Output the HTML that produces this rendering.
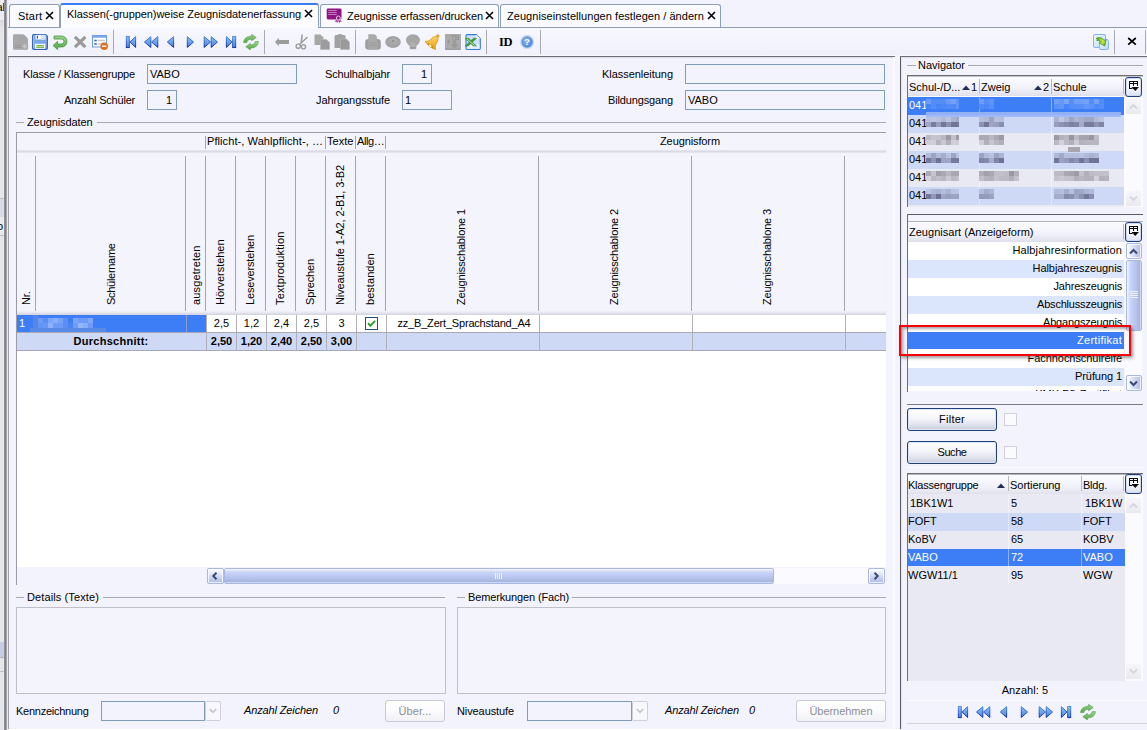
<!DOCTYPE html>
<html lang="de"><head><meta charset="utf-8"><title>Zeugnisdatenerfassung</title>
<style>
*{box-sizing:border-box}
html,body{margin:0;padding:0}
body{width:1147px;height:730px;overflow:hidden;position:relative;background:#f3f3fd;font-family:"Liberation Sans",sans-serif;font-size:11px;color:#000;line-height:13px}
.a{position:absolute;white-space:nowrap}
.t{position:absolute;white-space:nowrap;height:13px;line-height:13px}
.r{text-align:right}
.hl{position:absolute;height:1px;background:#a9a9b3}
.vl{position:absolute;width:1px;background:#a9a9b3}
.inp{position:absolute;background:#f3f3fd;border:1px solid #7f9db9;height:20px;line-height:18px;padding:0 3px 0 2px;white-space:nowrap}
.tab{position:absolute;top:4px;height:23px;border:1px solid #8d9fbb;border-bottom:none;border-radius:3px 3px 0 0;background:#fbfbff;line-height:22px;white-space:nowrap;font-size:11px}
.tab .x{position:absolute;top:6px;width:9px;height:9px}
.sep{position:absolute;top:30px;width:1px;height:24px;background:#a9a9b1}
.ic{position:absolute;top:34px;width:16px;height:16px}
</style></head><body>

<!-- left strip -->
<div class="a" style="left:0;top:0;width:4px;height:730px;background:#e6e6ea"></div>
<div class="a" style="left:0;top:0;width:4px;height:20px;background:#ededf1"></div>
<div class="a" style="left:0;top:20px;width:4px;height:8px;background:linear-gradient(#d9d9dd,#e6e6ea)"></div>
<div class="a" style="left:-7px;top:1px;width:12px;height:13px;overflow:hidden;text-align:right;font-size:11px;line-height:13px">al</div>
<div class="a" style="left:0;top:199px;width:4px;height:18px;background:#d7dbe8"></div>
<div class="a" style="left:0;top:217px;width:4px;height:18px;background:#e9e9ef"></div>
<div class="a" style="left:0;top:198px;width:4px;height:1px;background:#bcbcc6"></div>
<div class="a" style="left:0;top:235px;width:4px;height:1px;background:#bcbcc6"></div>
<div class="a" style="left:-3px;top:220px;width:6px;height:13px;overflow:hidden;text-align:right;font-size:11px;line-height:13px">o</div>
<div class="a" style="left:0;top:642px;width:4px;height:15px;background:#c6cee6"></div>
<div class="a" style="left:0;top:657px;width:4px;height:1px;background:#b4b4be"></div>
<div class="a" style="left:0;top:671px;width:4px;height:1px;background:#c2c2cc"></div>
<div class="a" style="left:4px;top:0;width:3px;height:730px;background:linear-gradient(90deg,#9a9a9e,#7f7f84 50%,#b9b9c3)"></div>
<div class="a" style="left:7px;top:0;width:1px;height:730px;background:#e9e9f4"></div>

<!-- tab strip -->
<div class="a" id="tabline" style="left:8px;top:27px;width:1139px;height:1px;background:#8d9fbb"></div>
<div class="tab" style="letter-spacing:0.233px;left:9px;width:51px;padding-left:8px">Start<svg class="x" style="left:35px" viewBox="0 0 9 9"><path d="M1 1L8 8M8 1L1 8" stroke="#000" stroke-width="1.55"/></svg></div>
<div class="tab" id="tabA" style="letter-spacing:-0.06px;left:60px;top:3px;width:259px;height:26px;padding-left:6px;border-top:2px solid #3c7cf0;background:#fdfdff;line-height:18px">Klassen(-gruppen)weise Zeugnisdatenerfassung<svg class="x" style="left:243px;top:4px" viewBox="0 0 9 9"><path d="M1 1L8 8M8 1L1 8" stroke="#000" stroke-width="1.55"/></svg></div>
<div class="tab" style="letter-spacing:-0.084px;left:320px;width:179px;padding-left:26px">Zeugnisse erfassen/drucken<svg class="a" style="left:5px;top:3px;width:17px;height:16px" viewBox="0 0 17 16"><rect x="0.700" y="0.400" width="14.800" height="11" rx="1.300" fill="#8d1482"/><path d="M2.300 2.500h8.400M2.300 4.500h8.400M2.300 6.500h8.400" stroke="#c57abf" stroke-width="1"/><path d="M10.300 11.500l-1.600 2.600 1.800-.3.500 1.600 1.200-2.600 1.200 2.600.6-1.600 1.800.3-1.700-2.700z" fill="#b043a6"/><circle cx="12.300" cy="10" r="2" fill="#8d1482" stroke="#f0d6ee" stroke-width=".9"/></svg><svg class="x" style="left:164px" viewBox="0 0 9 9"><path d="M1 1L8 8M8 1L1 8" stroke="#000" stroke-width="1.55"/></svg></div>
<div class="tab" style="letter-spacing:0.049px;left:500px;width:221px;padding-left:6px">Zeugniseinstellungen festlegen / ändern<svg class="x" style="left:206px" viewBox="0 0 9 9"><path d="M1 1L8 8M8 1L1 8" stroke="#000" stroke-width="1.55"/></svg></div>

<!-- toolbar -->
<div class="a" style="left:8px;top:28px;width:1139px;height:28px;background:linear-gradient(#f7f7ff,#f0f0fb)"></div>
<div class="a" style="left:8px;top:55px;width:1139px;height:1px;background:#f8f8ff"></div>
<div class="a" style="left:8px;top:56px;width:887px;height:1px;background:#6f6f76"></div>
<div class="a" style="left:900px;top:56px;width:247px;height:1px;background:#6f6f76"></div>
<div class="a" style="left:9px;top:57px;width:885px;height:1px;background:#dcdce8"></div>
<div class="a" style="left:901px;top:57px;width:246px;height:1px;background:#dcdce8"></div>
<div id="tb">
<svg width="0" height="0" style="position:absolute"><defs>
<linearGradient id="gb" x1="0" y1="0" x2="1" y2="0"><stop offset="0" stop-color="#7db4f6"/><stop offset="1" stop-color="#1c5ccc"/></linearGradient>
<linearGradient id="gb2" x1="1" y1="0" x2="0" y2="0"><stop offset="0" stop-color="#7db4f6"/><stop offset="1" stop-color="#1c5ccc"/></linearGradient>
<linearGradient id="gbf" x1="0" y1="0" x2="0" y2="1"><stop offset="0" stop-color="#8fbcf2"/><stop offset="1" stop-color="#4d86dc"/></linearGradient>
<linearGradient id="gbs" x1="0" y1="0" x2="0" y2="1"><stop offset="0" stop-color="#4a8de2"/><stop offset="1" stop-color="#0b2aa6"/></linearGradient>
<linearGradient id="gg" x1="0" y1="0" x2="0" y2="1"><stop offset="0" stop-color="#9ed68e"/><stop offset="1" stop-color="#55a548"/></linearGradient>
<radialGradient id="gq" cx=".4" cy=".35" r=".7"><stop offset="0" stop-color="#8fb6ea"/><stop offset="1" stop-color="#4f86d6"/></radialGradient>
<linearGradient id="gbell" x1="0" y1="0" x2="1" y2="1"><stop offset="0" stop-color="#ffe27a"/><stop offset="1" stop-color="#e79a10"/></linearGradient>
<symbol id="i-first" viewBox="0 0 16 16"><rect x="3.300" y="2.400" width="3" height="11.200" fill="url(#gbf)" stroke="url(#gbs)" stroke-width=".9"/><path d="M12.600 2.600v10.800L6.900 8z" fill="url(#gbf)" stroke="url(#gbs)" stroke-width="1" stroke-linejoin="round"/></symbol>
<symbol id="i-pprev" viewBox="0 0 16 16"><path d="M7.800 2.600v10.800L1.500 8z" fill="url(#gbf)" stroke="url(#gbs)" stroke-width="1" stroke-linejoin="round"/><path d="M14.800 2.600v10.800L8.500 8z" fill="url(#gbf)" stroke="url(#gbs)" stroke-width="1" stroke-linejoin="round"/></symbol>
<symbol id="i-prev" viewBox="0 0 16 16"><path d="M10.600 2.600v10.800L4.400 8z" fill="url(#gbf)" stroke="url(#gbs)" stroke-width="1" stroke-linejoin="round"/></symbol>
<symbol id="i-next" viewBox="0 0 16 16"><path d="M5.300 2.600v10.800L11.500 8z" fill="url(#gbf)" stroke="url(#gbs)" stroke-width="1" stroke-linejoin="round"/></symbol>
<symbol id="i-nnext" viewBox="0 0 16 16"><path d="M1.200 2.600v10.800L7.500 8z" fill="url(#gbf)" stroke="url(#gbs)" stroke-width="1" stroke-linejoin="round"/><path d="M8.200 2.600v10.800L14.500 8z" fill="url(#gbf)" stroke="url(#gbs)" stroke-width="1" stroke-linejoin="round"/></symbol>
<symbol id="i-last" viewBox="0 0 16 16"><rect x="9.700" y="2.400" width="3" height="11.200" fill="url(#gbf)" stroke="url(#gbs)" stroke-width=".9"/><path d="M3.400 2.600v10.800L9.100 8z" fill="url(#gbf)" stroke="url(#gbs)" stroke-width="1" stroke-linejoin="round"/></symbol>
<symbol id="i-refresh" viewBox="0 0 16 16"><path d="M0.600 8.600C0.800 4.500 4 2.200 8.600 2.200V0.300L13.200 3.500L8.600 6.800V5.200C6 5.200 4.200 6.200 3.800 8.600z" fill="url(#gg)" stroke="#4f9c45" stroke-width=".6" stroke-linejoin="round"/><path d="M15.400 7.600C15.200 11.700 12 14 7.400 14V15.900L2.800 12.700L7.400 9.400V11C10 11 11.800 10 12.200 7.600z" fill="url(#gg)" stroke="#4f9c45" stroke-width=".6" stroke-linejoin="round"/></symbol>
</defs></svg>
<!-- new doc (disabled) -->
<svg class="ic" style="left:13px" viewBox="0 0 16 16"><path d="M1.200 0.300h8.300q1.200 0 2.300 1l2.200 2.200q1 1 1 2.300v8.700q0 1.200-1.200 1.200H1.200Q0 15.700 0 14.500V1.500Q0 0.300 1.200 0.300z" fill="#a7a7a7"/><path d="M2 11.500h8M2 13.500h8" stroke="#9a9a9a" stroke-width="1"/><circle cx="11.700" cy="12.300" r="3.300" fill="#b1b1b1" stroke="#a2a2a2" stroke-width=".6"/><path d="M9.800 12.300h3.800M11.700 10.400v3.800" stroke="#c9c9c9" stroke-width="1.200"/></svg>
<!-- save -->
<svg class="ic" style="left:32px" viewBox="0 0 16 16"><path d="M0.600 1.600a1.100 1.100 0 0 1 1.100-1.100h11.800l1.900 1.700v12.100a1.100 1.100 0 0 1-1.100 1.100H1.700a1.100 1.100 0 0 1-1.100-1.100z" fill="#7ba5e6" stroke="#2f63b8" stroke-width="1.100"/><path d="M1.700 1.500v13" stroke="#a9c6f0" stroke-width="1"/><rect x="3.600" y="0.900" width="9.800" height="4.600" fill="#f4f7fd"/><rect x="9" y="0.900" width="4.400" height="4.600" fill="#d5e2f6"/><rect x="4.800" y="1.700" width="1.200" height="2.800" fill="#355fae"/><rect x="3" y="9.800" width="10.200" height="5" fill="#fdfdff"/><path d="M4.200 11.600h7.800M4.200 13.400h7.800" stroke="#7cba49" stroke-width="1.200"/></svg>
<!-- undo -->
<svg class="ic" style="left:52px" viewBox="0 0 16 16"><path d="M2 2H9.500A5.500 5.500 0 0 1 9.500 13H5.600V15.600L1 11.500L5.600 7.400V10H9.500A2.500 2.500 0 0 0 9.500 5H2z" fill="url(#gg)" stroke="#3f9440" stroke-width=".8" stroke-linejoin="round"/></svg>
<!-- delete X -->
<svg class="ic" style="left:72px" viewBox="0 0 16 16"><path d="M2.900 2.900L13.400 13.100M13.400 2.900L2.900 13.100" stroke="#9a9a9a" stroke-width="3.200"/></svg>
<!-- form minus -->
<svg class="ic" style="left:92px" viewBox="0 0 16 16"><rect x="0.500" y="1.500" width="14" height="11.500" fill="#fbfcff" stroke="#6f9be0" stroke-width="1"/><rect x="0.500" y="1.500" width="14" height="2.200" fill="#78a6ea"/><path d="M2.200 6.500h2.600M2.200 10h2.600" stroke="#2f65c4" stroke-width="1.300"/><path d="M6 6.500h7M6 10h4" stroke="#c9c9c9" stroke-width="1.600"/><circle cx="12.200" cy="12.200" r="3.500" fill="#e8701a" stroke="#c9560f" stroke-width=".5"/><rect x="10.200" y="11.500" width="4" height="1.500" fill="#fff"/></svg>
<div class="sep" style="left:113px"></div>
<svg class="ic" style="left:123px"><use href="#i-first"/></svg>
<svg class="ic" style="left:143px"><use href="#i-pprev"/></svg>
<svg class="ic" style="left:163px"><use href="#i-prev"/></svg>
<svg class="ic" style="left:182px"><use href="#i-next"/></svg>
<svg class="ic" style="left:203px"><use href="#i-nnext"/></svg>
<svg class="ic" style="left:223px"><use href="#i-last"/></svg>
<svg class="ic" style="left:243px"><use href="#i-refresh"/></svg>
<div class="sep" style="left:264px"></div>
<!-- back arrow -->
<svg class="ic" style="left:274px" viewBox="0 0 16 16"><path d="M1 8l3.800-4.200v2.200h10.200v4H4.800v2.200z" fill="#9c9c9c"/></svg>
<!-- scissors -->
<svg class="ic" style="left:294px" viewBox="0 0 16 16"><path d="M8.200 0.500L7 9.500M13.500 3L5.500 10.500" stroke="#9c9c9c" stroke-width="1.500" fill="none"/><circle cx="4.200" cy="12.200" r="2.100" fill="none" stroke="#9c9c9c" stroke-width="1.400"/><circle cx="9.500" cy="12.800" r="2.100" fill="none" stroke="#9c9c9c" stroke-width="1.400"/></svg>
<!-- copy -->
<svg class="ic" style="left:314px" viewBox="0 0 16 16"><path d="M0.500 0.500h6l3 3v7.500h-9z" fill="#a6a6a6"/><path d="M6.500 5.500h6l3 3v7h-9z" fill="#9c9c9c" stroke="#b4b4b4" stroke-width=".6"/></svg>
<!-- paste -->
<svg class="ic" style="left:334px" viewBox="0 0 16 16"><path d="M0.500 2.500q0-1.500 1.500-1.500h1.500q.5-1 2.500-1t2.500 1h1.500q1.500 0 1.500 1.500v11.500h-11z" fill="#a1a1a1"/><path d="M6.500 5h6l3 3v7.500h-9z" fill="#9a9a9a" stroke="#b6b6b6" stroke-width=".6"/></svg>
<div class="sep" style="left:355px"></div>
<!-- printer -->
<svg class="ic" style="left:365px" viewBox="0 0 16 16"><path d="M3.300 0.300h5.200q2.200 0 3.400 2.400v5H3.300z" fill="#a9a9a9"/><rect x="0.200" y="5" width="15.600" height="10.600" rx="3.200" fill="#9d9d9d"/><path d="M3.300 5h8.600v3H3.300z" fill="#a9a9a9"/><rect x="3.300" y="8.300" width="9.200" height="3.200" fill="#a4a4a4"/><path d="M3.300 8.300v3.200M12.500 8.300v3.200" stroke="#b4b4b4" stroke-width=".6"/><rect x="3" y="12" width="10" height="3.800" rx="1.200" fill="#a8a8a8"/></svg>
<!-- disc -->
<svg class="ic" style="left:385px" viewBox="0 0 16 16"><ellipse cx="8" cy="8" rx="7.800" ry="6" fill="#a3a3a3"/><ellipse cx="8" cy="7.300" rx="4.500" ry="3" fill="#ababab"/><circle cx="8" cy="7" r="1.100" fill="#8d8d8d"/></svg>
<!-- bulb -->
<svg class="ic" style="left:405px" viewBox="0 0 16 16"><path d="M8 0.300C12.500 0.300 15 3.400 15 6.200C15 9 12.400 10.400 11.300 12.200V14.300q0 1-1 1h-4.600q-1 0-1-1V12.200C3.600 10.400 1 9 1 6.200C1 3.400 3.500 0.300 8 0.300z" fill="#a6a6a6"/><path d="M5.600 8.300h4.800v5.500H5.600z" fill="#b0b0b0"/><path d="M5.200 13.600h5.600" stroke="#989898" stroke-width="1"/></svg>
<!-- bell -->
<svg class="ic" style="left:425px;top:33px;width:17px;height:17px" viewBox="0 0 17 17"><g transform="rotate(38 8.5 8.5)"><circle cx="8.500" cy="1.500" r="1.300" fill="#eeb02a" stroke="#c98a10" stroke-width=".5"/><path d="M8.500 2.600C5.800 2.600 5.300 6 4.900 9C4.600 11.200 3.200 12.300 1.800 13.600Q8.500 16 15.200 13.600C13.800 12.300 12.400 11.200 12.100 9C11.700 6 11.200 2.600 8.500 2.600z" fill="url(#gbell)" stroke="#d9940f" stroke-width=".7"/><ellipse cx="8.500" cy="13.600" rx="3.300" ry="1.300" fill="#c98a10"/><ellipse cx="8.500" cy="13.900" rx="1.700" ry="1.100" fill="#fff0a8"/></g></svg>
<!-- TB -->
<svg class="ic" style="left:445px" viewBox="0 0 16 16"><rect x="0" y="0" width="16" height="16" fill="#ababab"/><text x="5.800" y="5.800" font-family="Liberation Sans, sans-serif" font-size="6.500" fill="#8c8c8c">TB</text><path d="M8.500 6.500v4h-2l3 3.500 3-3.500h-2v-4z" fill="#9c9c9c" stroke="#8f8f8f" stroke-width=".5"/><path d="M1.800 7.800h3.600M3.600 6v3.600" stroke="#949494" stroke-width="1"/><path d="M0.500 15.200h15" stroke="#8f8f8f" stroke-width="1" stroke-dasharray="2 1"/></svg>
<!-- excel -->
<svg class="ic" style="left:465px" viewBox="0 0 16 16"><path d="M2.200 0.600h8.800l4.300 4.200v9.500q0 1.200-1.200 1.200H2.200q-1.200 0-1.200-1.200V1.800q0-1.200 1.200-1.200z" fill="#cfe1f9" stroke="#3a78d8" stroke-width="1.100"/><path d="M11 0.800v4h4.200z" fill="#f4f8ff"/><rect x="2" y="10.500" width="12.500" height="4.200" fill="#e8f1fd"/><path d="M0 4.200h3.800l2.200 2.300 2.600-2.300h3.100L7.400 8.200l4.200 3.900H8.300L5.800 9.700 3.200 12.100H0l4.200-3.900z" fill="#3f9a3a" stroke="#2c7a2c" stroke-width=".4"/><path d="M1.800 4.800l7.800 6.800" stroke="#d4efc8" stroke-width=".9"/></svg>
<div class="sep" style="left:486px"></div>
<div class="a" style="left:499px;top:35px;font-family:'Liberation Serif',serif;font-weight:bold;font-size:12.500px;line-height:14px;letter-spacing:-.3px">ID</div>
<!-- help -->
<svg class="ic" style="left:519px" viewBox="0 0 16 16"><circle cx="8.100" cy="8" r="6.900" fill="#b7cff1"/><circle cx="8.100" cy="8" r="6.200" fill="none" stroke="#dbe7f9" stroke-width=".8"/><circle cx="8.100" cy="8" r="5.300" fill="url(#gq)" stroke="#4d82d2" stroke-width=".7"/><text x="8.100" y="11.200" text-anchor="middle" font-family="Liberation Sans, sans-serif" font-weight="bold" font-size="9" fill="#fff">?</text></svg>
<div class="sep" style="left:540px"></div>
<!-- right side -->
<svg class="ic" style="left:1093px" viewBox="0 0 16 16"><defs><linearGradient id="gdoc" x1="0" y1="0" x2="1" y2="1"><stop offset="0" stop-color="#f2f8ff"/><stop offset="1" stop-color="#bcd8f8"/></linearGradient><linearGradient id="gya" x1="0" y1="0" x2="1" y2="1"><stop offset="0" stop-color="#35a322"/><stop offset=".55" stop-color="#d4ee3c"/><stop offset="1" stop-color="#3aa624"/></linearGradient></defs><rect x="0.500" y="0.500" width="12" height="13" rx="1.500" fill="url(#gdoc)" stroke="#86b2ea"/><rect x="6.500" y="5.500" width="9" height="10" rx="1.500" fill="url(#gdoc)" stroke="#86b2ea"/><path d="M3 4.600C5.500 2.800 9.600 3.400 11.300 6.800l1.700-.900-1.200 6.200-5.400-3 1.900-.900C7.400 6.300 5.200 6 3.800 6.800L4.800 5.500z" fill="url(#gya)" stroke="#2c8f1c" stroke-width=".7" stroke-linejoin="round"/></svg>
<div class="sep" style="left:1114px"></div>
<svg class="a" style="left:1127px;top:37px;width:10px;height:9px" viewBox="0 0 10 9"><path d="M1.200 1L8.800 7.600M8.800 1L1.200 7.600" stroke="#000" stroke-width="1.700"/></svg>
<div class="sep" style="left:1145px"></div>
</div>

<!-- main left panel -->
<div class="vl" style="left:8px;top:57px;height:672px;background:#a0a0aa"></div>
<div id="form">
<div class="t r" style="letter-spacing:-0.163px;left:10px;width:125px;top:68px">Klasse / Klassengruppe</div>
<div class="inp" style="left:147px;top:64px;width:150px">VABO</div>
<div class="t r" style="letter-spacing:-0.214px;left:10px;width:125px;top:94px">Anzahl Schüler</div>
<div class="inp r" style="left:147px;top:90px;width:30px;padding-right:4px">1</div>
<div class="t r" style="letter-spacing:-0.127px;left:290px;width:100px;top:68px">Schulhalbjahr</div>
<div class="inp r" style="left:402px;top:64px;width:30px;padding-right:4px">1</div>
<div class="t r" style="letter-spacing:-0.087px;left:290px;width:100px;top:94px">Jahrgangsstufe</div>
<div class="inp" style="left:402px;top:90px;width:50px">1</div>
<div class="t r" style="letter-spacing:-0.04px;left:560px;width:113px;top:68px">Klassenleitung</div>
<div class="inp" style="left:685px;top:64px;width:200px"></div>
<div class="t r" style="letter-spacing:-0.139px;left:560px;width:113px;top:94px">Bildungsgang</div>
<div class="inp" style="left:685px;top:90px;width:200px">VABO</div>
<div class="hl" style="left:16px;top:122px;width:8px"></div>
<div class="t" style="letter-spacing:-0.098px;left:27px;top:116px">Zeugnisdaten</div>
<div class="hl" style="left:97px;top:122px;width:789px"></div>
</div>
<div id="grid">
<style>
#grid .vt{position:absolute;top:292px;height:13px;line-height:13px;white-space:nowrap;transform-origin:0 100%;transform:rotate(-90deg)}
#grid .cs{position:absolute;top:156px;width:1px;height:155px;background:#a4a4ae}
#grid .bs{position:absolute;top:136px;width:1px;height:13px;background:#a4a4ae}
#grid .c{position:absolute;top:315px;height:17px;line-height:17px;text-align:center;background:#fff;border-left:1px solid #b0b0ba;white-space:nowrap}
#grid .av{position:absolute;top:333px;height:17px;line-height:16px;text-align:center;font-weight:bold;border-left:1px solid #b0b0ba;white-space:nowrap}
</style>
<div class="a" style="left:16px;top:132px;width:870px;height:1px;background:#9c9ca6"></div>
<div class="a" style="left:16px;top:132px;width:1px;height:453px;background:#9c9ca6"></div>
<!-- band header -->
<div class="a" style="left:17px;top:133px;width:869px;height:18px;background:#f4f4fd"></div>
<div class="a" style="left:17px;top:150px;width:869px;height:3px;background:linear-gradient(#e6e6f0,#dcdce7 50%,#e9e9f3)"></div>
<div class="bs" style="left:205px"></div><div class="bs" style="left:325px"></div><div class="bs" style="left:355px"></div><div class="bs" style="left:385px"></div>
<div class="t" style="letter-spacing:0.084px;left:207px;top:135px">Pflicht-, Wahlpflicht-, …</div>
<div class="t" style="letter-spacing:0.041px;left:327px;top:135px">Texte</div>
<div class="t" style="letter-spacing:-0.369px;left:357px;top:135px">Allg…</div>
<div class="t" style="letter-spacing:-0.104px;left:385px;width:610px;text-align:center;top:135px">Zeugnisform</div>
<!-- column header -->
<div class="a" style="left:17px;top:153px;width:869px;height:158px;background:#f4f4fd"></div>
<div class="cs" style="left:35px"></div><div class="cs" style="left:185px"></div><div class="cs" style="left:205px"></div><div class="cs" style="left:235px"></div><div class="cs" style="left:265px"></div><div class="cs" style="left:295px"></div><div class="cs" style="left:325px"></div><div class="cs" style="left:355px"></div><div class="cs" style="left:385px"></div><div class="cs" style="left:538px"></div><div class="cs" style="left:691px"></div><div class="cs" style="left:844px"></div>
<div class="vt" style="letter-spacing:-0.121px;left:33px">Nr.</div>
<div class="vt" style="letter-spacing:-0.293px;left:118px">Schülername</div>
<div class="vt" style="letter-spacing:0.136px;left:203px">ausgetreten</div>
<div class="vt" style="letter-spacing:-0.046px;left:227px">Hörverstehen</div>
<div class="vt" style="letter-spacing:-0.167px;left:257px">Leseverstehen</div>
<div class="vt" style="letter-spacing:0.132px;left:287px">Textproduktion</div>
<div class="vt" style="letter-spacing:-0.137px;left:317px">Sprechen</div>
<div class="vt" style="letter-spacing:-0.11px;left:347px">Niveaustufe 1-A2, 2-B1, 3-B2</div>
<div class="vt" style="letter-spacing:0.045px;left:377px">bestanden</div>
<div class="vt" style="letter-spacing:-0.137px;left:468px">Zeugnisschablone 1</div>
<div class="vt" style="letter-spacing:-0.137px;left:621px">Zeugnisschablone 2</div>
<div class="vt" style="letter-spacing:-0.137px;left:774px">Zeugnisschablone 3</div>
<div class="a" style="left:17px;top:311px;width:869px;height:4px;background:linear-gradient(#f1f1fb,#e4e4ee 50%,#d0d0db)"></div>
<!-- data row -->
<div class="a" style="left:17px;top:315px;width:189px;height:17px;background:#3d7ef6"></div>
<div class="a" style="left:186px;top:315px;width:1px;height:17px;background:#8b9fc9"></div>
<svg class="a" style="left:30px;top:315px;width:76px;height:18px" viewBox="0 0 76 18" shape-rendering="crispEdges"><rect x="3" y="0" width="5" height="18" fill="#5786e6"/><rect x="8" y="3" width="5" height="5" fill="#6d9bf7"/><rect x="8" y="8" width="5" height="5" fill="#6293f6"/><rect x="13" y="3" width="5" height="5" fill="#5b8ff6"/><rect x="13" y="8" width="5" height="5" fill="#6897f7"/><rect x="18" y="3" width="5" height="5" fill="#7ba6f9"/><rect x="18" y="8" width="5" height="5" fill="#8db2fa"/><rect x="23" y="3" width="5" height="5" fill="#8aaffa"/><rect x="23" y="8" width="5" height="5" fill="#6d9bf7"/><rect x="28" y="3" width="5" height="5" fill="#79a3f8"/><rect x="28" y="8" width="5" height="5" fill="#6c9af7"/><rect x="33" y="3" width="5" height="5" fill="#5d90f6"/><rect x="33" y="8" width="5" height="5" fill="#5a8ef5"/><rect x="38" y="8" width="5" height="5" fill="#4a84f4"/><rect x="43" y="3" width="5" height="5" fill="#7aa4f8"/><rect x="43" y="8" width="5" height="5" fill="#6d9bf7"/><rect x="48" y="3" width="5" height="5" fill="#6b9af7"/><rect x="48" y="8" width="5" height="5" fill="#94b7fb"/><rect x="53" y="3" width="5" height="5" fill="#6b9af7"/><rect x="53" y="8" width="5" height="5" fill="#88aefa"/><rect x="58" y="3" width="5" height="5" fill="#7ea7f9"/><rect x="58" y="8" width="5" height="5" fill="#6d9bf7"/><rect x="0" y="13" width="76" height="5" fill="#5b89e6"/></svg>
<div class="t" style="left:19px;top:317px;color:#fff">1</div>
<div class="c" style="left:206px;width:30px">2,5</div>
<div class="c" style="left:236px;width:30px">1,2</div>
<div class="c" style="left:266px;width:30px">2,4</div>
<div class="c" style="left:296px;width:30px">2,5</div>
<div class="c" style="left:326px;width:30px">3</div>
<div class="c" style="left:356px;width:30px"><svg class="a" style="left:8px;top:2px;width:13px;height:13px" viewBox="0 0 13 13"><rect x="0.5" y="0.5" width="12" height="12" fill="#fff" stroke="#1c5180"/><path d="M3 6.2l2.3 2.6L10 3.8" fill="none" stroke="#21a121" stroke-width="1.8"/></svg></div>
<div class="c" style="letter-spacing:-0.191px;left:386px;width:153px;padding-left:2px">zz_B_Zert_Sprachstand_A4</div>
<div class="c" style="left:539px;width:153px"></div>
<div class="c" style="left:692px;width:153px"></div>
<div class="c" style="left:845px;width:41px"></div>
<div class="a" style="left:17px;top:332px;width:869px;height:1px;background:#a8a8b2"></div>
<!-- average row -->
<div class="a" style="left:17px;top:333px;width:869px;height:17px;background:#cdd9f5"></div>
<div class="av" style="letter-spacing:0.269px;left:36px;width:150px;border-left:none">Durchschnitt:</div>
<div class="av" style="left:206px;width:30px">2,50</div>
<div class="av" style="left:236px;width:30px">1,20</div>
<div class="av" style="left:266px;width:30px">2,40</div>
<div class="av" style="left:296px;width:30px">2,50</div>
<div class="av" style="left:326px;width:30px">3,00</div>
<div class="av" style="left:356px;width:30px"></div>
<div class="av" style="left:386px;width:153px"></div>
<div class="av" style="left:539px;width:153px"></div>
<div class="av" style="left:692px;width:153px"></div>
<div class="av" style="left:845px;width:41px"></div>
<div class="a" style="left:17px;top:350px;width:869px;height:1px;background:#a8a8b2"></div>
<!-- empty -->
<div class="a" style="left:17px;top:351px;width:869px;height:216px;background:#fff"></div>
<!-- h scrollbar -->
<div class="a" style="left:17px;top:567px;width:869px;height:18px;background:#f3f3fd"></div>
<div class="a" style="left:207px;top:568px;width:17px;height:16px;border:1px solid #a9b8e0;border-radius:2px;background:linear-gradient(#ffffff,#dfe6fa 35%,#aebbe4);box-shadow:inset 0 0 0 1px rgba(255,255,255,.8)"><svg class="a" style="left:3px;top:3px;width:8px;height:8px" viewBox="0 0 8 8"><path d="M5.5 0.8L2.3 4l3.2 3.2" fill="none" stroke="#3b4b6c" stroke-width="2"/></svg></div>
<div class="a" style="left:224px;top:568px;width:550px;height:16px;border:1px solid #a9b8e0;border-radius:2px;background:linear-gradient(#f6f8ff,#c9d5f9 22%,#b7c4ee 60%,#a6b4de 92%,#f0f3fd)"></div>
<div class="a" style="left:495px;top:573px;width:8px;height:6px;background:repeating-linear-gradient(90deg,#eef2fd 0 1px,transparent 1px 2px)"></div>
<div class="a" style="left:774px;top:568px;width:94px;height:16px;background:#fafaff"></div>
<div class="a" style="left:868px;top:568px;width:17px;height:16px;border:1px solid #a9b8e0;border-radius:2px;background:linear-gradient(#ffffff,#dfe6fa 35%,#aebbe4);box-shadow:inset 0 0 0 1px rgba(255,255,255,.8)"><svg class="a" style="left:3px;top:3px;width:8px;height:8px" viewBox="0 0 8 8"><path d="M2.5 0.8L5.7 4L2.5 7.2" fill="none" stroke="#3b4b6c" stroke-width="2"/></svg></div>
</div>
<div id="bottom">
<style>
#bottom .box{position:absolute;top:607px;height:87px;border:1px solid #c0c0ca;background:#f4f4fd}
#bottom .btn{position:absolute;top:700px;height:22px;border:1px solid #c9c9d3;border-radius:3px;background:linear-gradient(#ffffff,#fbfbfe 50%,#f0f0f6);color:#8e8e96;text-align:center;line-height:20px}
#bottom .cb{position:absolute;top:701px;height:20px;border:1px solid #7f9db9;background:#f3f3fd}
#bottom .dd{position:absolute;top:701px;width:16px;height:20px;border:1px solid #d0d0da;border-radius:2px;background:#f7f7fd}
#bottom i{position:absolute;top:704px;height:13px;line-height:13px;white-space:nowrap}
</style>
<div class="hl" style="left:16px;top:597px;width:8px"></div>
<div class="t" style="letter-spacing:0.114px;left:27px;top:591px">Details (Texte)</div>
<div class="hl" style="left:103px;top:597px;width:342px"></div>
<div class="box" style="left:16px;width:430px"></div>
<div class="hl" style="left:457px;top:597px;width:8px"></div>
<div class="t" style="letter-spacing:-0.129px;left:468px;top:591px">Bemerkungen (Fach)</div>
<div class="hl" style="left:572px;top:597px;width:314px"></div>
<div class="box" style="left:457px;width:429px"></div>
<div class="t" style="letter-spacing:-0.257px;left:16px;top:705px">Kennzeichnung</div>
<div class="cb" style="left:101px;width:104px"></div>
<div class="dd" style="left:205px"><svg class="a" style="left:3px;top:6px;width:8px;height:6px" viewBox="0 0 8 6"><path d="M0.8 1L4 4.4L7.2 1" fill="none" stroke="#c3c3cc" stroke-width="1.6"/></svg></div>
<i style="letter-spacing:-0.131px;left:244px">Anzahl Zeichen</i><i style="left:333px">0</i>
<div class="btn" style="letter-spacing:0.085px;left:385px;width:60px">Über...</div>
<div class="t" style="letter-spacing:-0.099px;left:457px;top:705px">Niveaustufe</div>
<div class="cb" style="left:527px;width:105px"></div>
<div class="dd" style="left:632px"><svg class="a" style="left:3px;top:6px;width:8px;height:6px" viewBox="0 0 8 6"><path d="M0.8 1L4 4.4L7.2 1" fill="none" stroke="#c3c3cc" stroke-width="1.6"/></svg></div>
<i style="letter-spacing:-0.131px;left:665px">Anzahl Zeichen</i><i style="left:749px">0</i>
<div class="btn" style="letter-spacing:-0.059px;left:796px;width:90px">Übernehmen</div>
</div>

<!-- splitter -->
<div class="a" style="left:893px;top:57px;width:2px;height:672px;background:#fafaff"></div>
<div class="a" style="left:895px;top:55px;width:5px;height:675px;background:#f3f3fd"></div>
<div class="a" style="left:900px;top:57px;width:1px;height:672px;background:#5a5a60"></div>
<div class="a" style="left:901px;top:57px;width:1px;height:672px;background:#e6e6f0"></div>

<div id="right">
<style>
#right .hd{position:absolute;height:19px;background:linear-gradient(#fbfbff,#f1f1fb 60%,#dfdfea);}
#right .ht{position:absolute;height:13px;line-height:13px;white-space:nowrap}
#right .hs{position:absolute;width:1px;height:15px;background:#b9b9c4}
#right .cbt{position:absolute;width:17px;height:20px;border:1px solid #1f3f77;border-radius:3px;background:linear-gradient(#ffffff,#f4f6fd 55%,#dde2f1);box-shadow:inset 0 0 0 1px #cfdaf2}
#right .row{position:absolute;left:908px;width:216px;height:18px}
#right .rt{position:absolute;height:13px;line-height:13px;white-space:nowrap}
#right .bl{position:absolute;height:9px;filter:blur(1.2px);opacity:.85}
#right .sb{position:absolute;left:1125px;width:17px;background:#fbfbff}
#right .ws{position:absolute;width:1px;background:rgba(255,255,255,.4)}
#right .arr{position:absolute;left:1126px;width:16px;height:16px;border:1px solid #a9b8e0;border-radius:2px;background:linear-gradient(90deg,#ffffff,#dfe6fa 35%,#aebbe4);box-shadow:inset 0 0 0 1px rgba(255,255,255,.8)}
#right .arrd{position:absolute;left:1126px;width:15px;height:15px;background:linear-gradient(#f6f6fa,#e9e9ef)}
#right .btn{position:absolute;left:907px;width:90px;height:23px;border:1px solid #1f3f77;border-radius:3px;background:linear-gradient(#ffffff,#f4f5fb 45%,#dcdeea 80%,#c9cbd9);text-align:center;line-height:21px;box-shadow:inset 0 0 0 1px #dfe6f8}
#right .chk{position:absolute;left:1004px;width:13px;height:13px;border:1px solid #d0d0da;background:#fafaff}
</style>
<!-- Navigator legend -->
<div class="hl" style="left:907px;top:65px;width:9px"></div>
<div class="t" style="letter-spacing:-0.009px;left:918px;top:59px">Navigator</div>
<div class="hl" style="left:968px;top:65px;width:175px"></div>
<!-- grid 1 -->
<div class="a" style="left:907px;top:75px;width:236px;height:132px;background:#fbfbff"></div>
<div class="a" style="left:907px;top:75px;width:236px;height:1px;background:#6d6d74"></div>
<div class="a" style="left:907px;top:76px;width:236px;height:1px;background:#c3c3cd"></div>
<div class="a" style="left:907px;top:75px;width:1px;height:132px;background:#6e6e76"></div>
<div class="hd" style="left:908px;top:77px;width:217px"></div>
<div class="ht" style="left:909px;top:81px">Schul-/D...</div>
<svg class="a" style="left:962px;top:85px;width:8px;height:5px" viewBox="0 0 8 5"><path d="M0 5L4 0.5L8 5z" fill="#1f2f55"/></svg>
<div class="ht" style="left:971px;top:81px">1</div>
<div class="hs" style="left:979px;top:79px"></div>
<div class="ht" style="left:981px;top:81px">Zweig</div>
<svg class="a" style="left:1034px;top:85px;width:8px;height:5px" viewBox="0 0 8 5"><path d="M0 5L4 0.5L8 5z" fill="#1f2f55"/></svg>
<div class="ht" style="left:1043px;top:81px">2</div>
<div class="hs" style="left:1051px;top:79px"></div>
<div class="ht" style="left:1053px;top:81px">Schule</div>
<div class="hs" style="left:1123px;top:79px"></div>
<div class="cbt" style="left:1125px;top:77px"><svg class="a" style="left:3px;top:3px;width:11px;height:11px" viewBox="0 0 11 11"><path d="M0 0.500h9M0 2.500h9M0.500 0v8M0 7.500h3.500M4.500 0v5M8.500 0v5" fill="none" stroke="#0a0a0a" stroke-width="1"/><path d="M2.500 6h7.500L6.250 10z" fill="#0a0a0a"/></svg></div>
<div class="a" style="left:908px;top:97px;width:216px;height:110px;background:#e9e9f3"></div>
<div class="row" style="top:97px;background:#3d7ef6"></div>
<div class="row" style="top:115px;background:#cdd9f5"></div>
<div class="row" style="top:133px;background:#e9e9f3"></div>
<div class="row" style="top:151px;background:#cdd9f5"></div>
<div class="row" style="top:169px;background:#e9e9f3"></div>
<div class="row" style="top:187px;background:#cdd9f5;height:18px"></div>
<div class="ws" style="left:979px;top:97px;height:108px"></div>
<div class="ws" style="left:1051px;top:97px;height:108px"></div>
<div class="rt" style="left:909px;top:99px;color:#fff">041</div>
<div class="rt" style="left:909px;top:117px">041</div>
<div class="rt" style="left:909px;top:135px">041</div>
<div class="rt" style="left:909px;top:153px">041</div>
<div class="rt" style="left:909px;top:171px">041</div>
<div class="rt" style="left:909px;top:189px">041</div>
<!-- blurred patches -->
<svg class="a" style="left:920px;top:95px;width:205px;height:112px" viewBox="0 0 205 112" shape-rendering="crispEdges"><rect x="6" y="4" width="5" height="5" fill="#6c9cf9"/><rect x="6" y="9" width="5" height="5" fill="#4684f7"/><rect x="11" y="4" width="5" height="5" fill="#548df8"/><rect x="11" y="9" width="5" height="5" fill="#558ef8"/><rect x="16" y="4" width="5" height="5" fill="#548df8"/><rect x="16" y="9" width="5" height="5" fill="#4784f7"/><rect x="21" y="4" width="5" height="5" fill="#568ef8"/><rect x="21" y="9" width="5" height="5" fill="#4b87f7"/><rect x="26" y="4" width="5" height="5" fill="#699af9"/><rect x="26" y="9" width="5" height="5" fill="#518bf7"/><rect x="31" y="4" width="5" height="5" fill="#74a2fa"/><rect x="31" y="9" width="5" height="5" fill="#4e89f7"/><rect x="36" y="4" width="3" height="5" fill="#5e93f8"/><rect x="36" y="9" width="3" height="5" fill="#5f94f8"/><rect x="59" y="4" width="5" height="5" fill="#6b9cf9"/><rect x="59" y="9" width="5" height="5" fill="#508bf7"/><rect x="64" y="4" width="5" height="5" fill="#548df8"/><rect x="64" y="9" width="5" height="5" fill="#4b87f7"/><rect x="69" y="4" width="5" height="5" fill="#5e93f8"/><rect x="69" y="9" width="5" height="5" fill="#588ff8"/><rect x="134" y="4" width="5" height="5" fill="#71a0f9"/><rect x="134" y="9" width="5" height="5" fill="#5b92f8"/><rect x="139" y="4" width="5" height="5" fill="#6799f9"/><rect x="139" y="9" width="5" height="5" fill="#6196f8"/><rect x="144" y="4" width="5" height="5" fill="#79a5fa"/><rect x="144" y="9" width="5" height="5" fill="#4885f7"/><rect x="149" y="4" width="5" height="5" fill="#578ff8"/><rect x="149" y="9" width="5" height="5" fill="#548df8"/><rect x="154" y="4" width="5" height="5" fill="#709ff9"/><rect x="154" y="9" width="5" height="5" fill="#578ff8"/><rect x="159" y="4" width="5" height="5" fill="#6d9ef9"/><rect x="159" y="9" width="5" height="5" fill="#588ff8"/><rect x="164" y="4" width="5" height="5" fill="#73a1fa"/><rect x="164" y="9" width="5" height="5" fill="#6497f9"/><rect x="169" y="4" width="5" height="5" fill="#548df8"/><rect x="169" y="9" width="5" height="5" fill="#5b92f8"/><rect x="174" y="4" width="5" height="5" fill="#73a1fa"/><rect x="174" y="9" width="5" height="5" fill="#4d89f7"/><rect x="179" y="4" width="5" height="5" fill="#528cf7"/><rect x="179" y="9" width="5" height="5" fill="#538df7"/><rect x="6" y="22" width="5" height="5" fill="#b8c2df"/><rect x="6" y="27" width="5" height="5" fill="#9fa7c6"/><rect x="11" y="22" width="5" height="5" fill="#bbc6e3"/><rect x="11" y="27" width="5" height="5" fill="#787d9f"/><rect x="16" y="22" width="5" height="5" fill="#b9c3e1"/><rect x="16" y="27" width="5" height="5" fill="#979ebe"/><rect x="21" y="22" width="5" height="5" fill="#b0b9d8"/><rect x="21" y="27" width="5" height="5" fill="#727699"/><rect x="26" y="22" width="5" height="5" fill="#bbc5e2"/><rect x="26" y="27" width="5" height="5" fill="#8b91b2"/><rect x="31" y="22" width="5" height="5" fill="#abb3d2"/><rect x="31" y="27" width="5" height="5" fill="#727598"/><rect x="36" y="22" width="3" height="5" fill="#a1a9c9"/><rect x="36" y="27" width="3" height="5" fill="#737799"/><rect x="59" y="22" width="5" height="5" fill="#b4bddb"/><rect x="59" y="27" width="5" height="5" fill="#8d93b4"/><rect x="64" y="22" width="5" height="5" fill="#b1bbd9"/><rect x="64" y="27" width="5" height="5" fill="#727598"/><rect x="69" y="22" width="5" height="5" fill="#9da4c4"/><rect x="69" y="27" width="5" height="5" fill="#9da4c4"/><rect x="74" y="22" width="5" height="5" fill="#b7c1df"/><rect x="74" y="27" width="5" height="5" fill="#989fbf"/><rect x="79" y="22" width="5" height="5" fill="#b5bfdd"/><rect x="79" y="27" width="5" height="5" fill="#898fb0"/><rect x="134" y="22" width="5" height="5" fill="#a9b2d1"/><rect x="134" y="27" width="5" height="5" fill="#969dbd"/><rect x="139" y="22" width="5" height="5" fill="#bdc8e5"/><rect x="139" y="27" width="5" height="5" fill="#8d93b4"/><rect x="144" y="22" width="5" height="5" fill="#b1bad8"/><rect x="144" y="27" width="5" height="5" fill="#848aab"/><rect x="149" y="22" width="5" height="5" fill="#9da4c4"/><rect x="149" y="27" width="5" height="5" fill="#7d82a4"/><rect x="154" y="22" width="5" height="5" fill="#acb5d3"/><rect x="154" y="27" width="5" height="5" fill="#8186a8"/><rect x="159" y="22" width="5" height="5" fill="#a6afce"/><rect x="159" y="27" width="5" height="5" fill="#a3abca"/><rect x="164" y="22" width="5" height="5" fill="#9fa6c6"/><rect x="164" y="27" width="5" height="5" fill="#787c9e"/><rect x="169" y="22" width="5" height="5" fill="#9fa7c7"/><rect x="169" y="27" width="5" height="5" fill="#777b9d"/><rect x="174" y="22" width="5" height="5" fill="#b0b9d7"/><rect x="174" y="27" width="5" height="5" fill="#8e94b5"/><rect x="179" y="22" width="5" height="5" fill="#bac4e1"/><rect x="179" y="27" width="5" height="5" fill="#8085a7"/><rect x="6" y="40" width="5" height="5" fill="#bbbac4"/><rect x="6" y="45" width="5" height="5" fill="#cecdd7"/><rect x="11" y="40" width="5" height="5" fill="#c6c4ce"/><rect x="11" y="45" width="5" height="5" fill="#cfcdd7"/><rect x="16" y="40" width="5" height="5" fill="#c4c3cd"/><rect x="16" y="45" width="5" height="5" fill="#b5b3bd"/><rect x="21" y="40" width="5" height="5" fill="#b9b7c1"/><rect x="21" y="45" width="5" height="5" fill="#c8c6d0"/><rect x="26" y="40" width="5" height="5" fill="#9c99a3"/><rect x="26" y="45" width="5" height="5" fill="#b1aeb8"/><rect x="31" y="40" width="5" height="5" fill="#c2c0ca"/><rect x="31" y="45" width="5" height="5" fill="#d0cfd9"/><rect x="36" y="40" width="3" height="5" fill="#9d9aa4"/><rect x="36" y="45" width="3" height="5" fill="#cecdd7"/><rect x="59" y="40" width="5" height="5" fill="#aca9b3"/><rect x="59" y="45" width="5" height="5" fill="#cfced8"/><rect x="64" y="40" width="5" height="5" fill="#aca9b3"/><rect x="64" y="45" width="5" height="5" fill="#b1afb9"/><rect x="69" y="40" width="5" height="5" fill="#b9b7c1"/><rect x="69" y="45" width="5" height="5" fill="#c7c5cf"/><rect x="74" y="40" width="5" height="5" fill="#aba9b3"/><rect x="74" y="45" width="5" height="5" fill="#b8b6c0"/><rect x="79" y="40" width="5" height="5" fill="#9e9aa4"/><rect x="79" y="45" width="5" height="5" fill="#b1afb9"/><rect x="134" y="40" width="5" height="5" fill="#9d9aa4"/><rect x="134" y="45" width="5" height="5" fill="#bab8c2"/><rect x="139" y="40" width="5" height="5" fill="#b4b2bc"/><rect x="139" y="45" width="5" height="5" fill="#d3d2dc"/><rect x="144" y="40" width="5" height="5" fill="#b9b7c1"/><rect x="144" y="45" width="5" height="5" fill="#bbb9c3"/><rect x="149" y="40" width="5" height="5" fill="#98949e"/><rect x="149" y="45" width="5" height="5" fill="#b1afb9"/><rect x="154" y="40" width="5" height="5" fill="#bbb9c3"/><rect x="154" y="45" width="5" height="5" fill="#cccbd5"/><rect x="159" y="40" width="5" height="5" fill="#a7a4ae"/><rect x="159" y="45" width="5" height="5" fill="#b4b2bc"/><rect x="164" y="40" width="5" height="5" fill="#a6a3ad"/><rect x="164" y="45" width="5" height="5" fill="#b8b6c0"/><rect x="169" y="40" width="5" height="5" fill="#99959f"/><rect x="169" y="45" width="5" height="5" fill="#b8b6c0"/><rect x="174" y="40" width="5" height="5" fill="#bdbbc5"/><rect x="174" y="45" width="5" height="5" fill="#b8b6c0"/><rect x="6" y="58" width="5" height="5" fill="#b2bbda"/><rect x="6" y="63" width="5" height="5" fill="#767b9d"/><rect x="11" y="58" width="5" height="5" fill="#9ca4c3"/><rect x="11" y="63" width="5" height="5" fill="#8e95b5"/><rect x="16" y="58" width="5" height="5" fill="#b0b9d7"/><rect x="16" y="63" width="5" height="5" fill="#6e7194"/><rect x="21" y="58" width="5" height="5" fill="#a5adcc"/><rect x="21" y="63" width="5" height="5" fill="#9ca3c3"/><rect x="26" y="58" width="5" height="5" fill="#b9c3e1"/><rect x="26" y="63" width="5" height="5" fill="#9da4c4"/><rect x="31" y="58" width="5" height="5" fill="#9ea6c6"/><rect x="31" y="63" width="5" height="5" fill="#767a9d"/><rect x="36" y="58" width="3" height="5" fill="#b8c2e0"/><rect x="36" y="63" width="3" height="5" fill="#75799c"/><rect x="59" y="58" width="5" height="5" fill="#9ca3c3"/><rect x="59" y="63" width="5" height="5" fill="#7f84a6"/><rect x="64" y="58" width="5" height="5" fill="#b1bbd9"/><rect x="64" y="63" width="5" height="5" fill="#858bac"/><rect x="69" y="58" width="5" height="5" fill="#b9c3e1"/><rect x="69" y="63" width="5" height="5" fill="#a5adcc"/><rect x="74" y="58" width="5" height="5" fill="#9ca4c3"/><rect x="74" y="63" width="5" height="5" fill="#7f84a6"/><rect x="79" y="58" width="5" height="5" fill="#abb4d3"/><rect x="79" y="63" width="5" height="5" fill="#6f7295"/><rect x="134" y="58" width="5" height="5" fill="#afb8d6"/><rect x="134" y="63" width="5" height="5" fill="#727699"/><rect x="139" y="58" width="5" height="5" fill="#a1a9c8"/><rect x="139" y="63" width="5" height="5" fill="#99a1c0"/><rect x="144" y="58" width="5" height="5" fill="#b5bedc"/><rect x="144" y="63" width="5" height="5" fill="#949bbc"/><rect x="149" y="58" width="5" height="5" fill="#b5bfdd"/><rect x="149" y="63" width="5" height="5" fill="#8388aa"/><rect x="154" y="58" width="5" height="5" fill="#b4bedc"/><rect x="154" y="63" width="5" height="5" fill="#8d93b4"/><rect x="159" y="58" width="5" height="5" fill="#b9c3e1"/><rect x="159" y="63" width="5" height="5" fill="#707497"/><rect x="164" y="58" width="5" height="5" fill="#b1bbd9"/><rect x="164" y="63" width="5" height="5" fill="#8b91b2"/><rect x="169" y="58" width="5" height="5" fill="#a9b2d1"/><rect x="169" y="63" width="5" height="5" fill="#707497"/><rect x="174" y="58" width="5" height="5" fill="#afb8d6"/><rect x="174" y="63" width="5" height="5" fill="#707396"/><rect x="6" y="76" width="5" height="5" fill="#aca9b3"/><rect x="6" y="81" width="5" height="5" fill="#d3d2dc"/><rect x="11" y="76" width="5" height="5" fill="#c6c4ce"/><rect x="11" y="81" width="5" height="5" fill="#b8b6c0"/><rect x="16" y="76" width="5" height="5" fill="#a29fa9"/><rect x="16" y="81" width="5" height="5" fill="#c0bec8"/><rect x="21" y="76" width="5" height="5" fill="#aaa8b2"/><rect x="21" y="81" width="5" height="5" fill="#b8b6c0"/><rect x="26" y="76" width="5" height="5" fill="#b9b7c1"/><rect x="26" y="81" width="5" height="5" fill="#cac9d3"/><rect x="31" y="76" width="5" height="5" fill="#aaa7b1"/><rect x="31" y="81" width="5" height="5" fill="#b9b7c1"/><rect x="36" y="76" width="3" height="5" fill="#a8a5af"/><rect x="36" y="81" width="3" height="5" fill="#c2c0ca"/><rect x="59" y="76" width="5" height="5" fill="#afadb7"/><rect x="59" y="81" width="5" height="5" fill="#c1bfc9"/><rect x="64" y="76" width="5" height="5" fill="#a3a0aa"/><rect x="64" y="81" width="5" height="5" fill="#b5b3bd"/><rect x="69" y="76" width="5" height="5" fill="#aaa7b1"/><rect x="69" y="81" width="5" height="5" fill="#b3b0ba"/><rect x="74" y="76" width="5" height="5" fill="#c0bec8"/><rect x="74" y="81" width="5" height="5" fill="#c4c3cd"/><rect x="79" y="76" width="5" height="5" fill="#c2c0ca"/><rect x="79" y="81" width="5" height="5" fill="#bcbac4"/><rect x="84" y="76" width="5" height="5" fill="#bebcc6"/><rect x="84" y="81" width="5" height="5" fill="#bbb9c3"/><rect x="89" y="76" width="5" height="5" fill="#9a97a1"/><rect x="89" y="81" width="5" height="5" fill="#b2afb9"/><rect x="94" y="76" width="5" height="5" fill="#b2b0ba"/><rect x="94" y="81" width="5" height="5" fill="#c3c1cb"/><rect x="134" y="76" width="5" height="5" fill="#bebcc6"/><rect x="134" y="81" width="5" height="5" fill="#c5c3cd"/><rect x="139" y="76" width="5" height="5" fill="#bcbac4"/><rect x="139" y="81" width="5" height="5" fill="#c9c7d1"/><rect x="144" y="76" width="5" height="5" fill="#aaa8b2"/><rect x="144" y="81" width="5" height="5" fill="#c4c3cd"/><rect x="149" y="76" width="5" height="5" fill="#a7a4ae"/><rect x="149" y="81" width="5" height="5" fill="#c2c0ca"/><rect x="154" y="76" width="5" height="5" fill="#9f9ca6"/><rect x="154" y="81" width="5" height="5" fill="#b2afb9"/><rect x="159" y="76" width="5" height="5" fill="#c4c2cc"/><rect x="159" y="81" width="5" height="5" fill="#b8b6c0"/><rect x="164" y="76" width="5" height="5" fill="#b1afb9"/><rect x="164" y="81" width="5" height="5" fill="#b4b1bb"/><rect x="169" y="76" width="5" height="5" fill="#bebdc7"/><rect x="169" y="81" width="5" height="5" fill="#b3b1bb"/><rect x="174" y="76" width="5" height="5" fill="#c1c0ca"/><rect x="174" y="81" width="5" height="5" fill="#d2d1db"/><rect x="179" y="76" width="5" height="5" fill="#c2c1cb"/><rect x="179" y="81" width="5" height="5" fill="#b3b0ba"/><rect x="184" y="76" width="5" height="5" fill="#c2c0ca"/><rect x="184" y="81" width="5" height="5" fill="#b6b3bd"/><rect x="6" y="94" width="5" height="5" fill="#bbc5e3"/><rect x="6" y="99" width="5" height="5" fill="#737799"/><rect x="11" y="94" width="5" height="5" fill="#aeb7d5"/><rect x="11" y="99" width="5" height="5" fill="#9298b9"/><rect x="16" y="94" width="5" height="5" fill="#aab3d2"/><rect x="16" y="99" width="5" height="5" fill="#6f7296"/><rect x="21" y="94" width="5" height="5" fill="#b4bedc"/><rect x="21" y="99" width="5" height="5" fill="#9ea6c5"/><rect x="26" y="94" width="5" height="5" fill="#abb4d3"/><rect x="26" y="99" width="5" height="5" fill="#989fbf"/><rect x="31" y="94" width="5" height="5" fill="#bac4e1"/><rect x="31" y="99" width="5" height="5" fill="#9ca4c3"/><rect x="36" y="94" width="3" height="5" fill="#bcc6e3"/><rect x="36" y="99" width="3" height="5" fill="#9aa1c1"/><rect x="59" y="94" width="5" height="5" fill="#b3bcda"/><rect x="59" y="99" width="5" height="5" fill="#949abb"/><rect x="64" y="94" width="5" height="5" fill="#a3accb"/><rect x="64" y="99" width="5" height="5" fill="#959bbc"/><rect x="69" y="94" width="5" height="5" fill="#acb5d4"/><rect x="69" y="99" width="5" height="5" fill="#9ba3c2"/><rect x="134" y="94" width="5" height="5" fill="#b1bbd9"/><rect x="134" y="99" width="5" height="5" fill="#a5adcc"/><rect x="139" y="94" width="5" height="5" fill="#b5bfdc"/><rect x="139" y="99" width="5" height="5" fill="#a5adcc"/><rect x="144" y="94" width="5" height="5" fill="#a4adcc"/><rect x="144" y="99" width="5" height="5" fill="#858bac"/><rect x="149" y="94" width="5" height="5" fill="#b7c1de"/><rect x="149" y="99" width="5" height="5" fill="#8a90b1"/><rect x="154" y="94" width="5" height="5" fill="#9da5c5"/><rect x="154" y="99" width="5" height="5" fill="#9fa7c7"/><rect x="159" y="94" width="5" height="5" fill="#a1a9c9"/><rect x="159" y="99" width="5" height="5" fill="#8c92b3"/><rect x="164" y="94" width="5" height="5" fill="#acb5d4"/><rect x="164" y="99" width="5" height="5" fill="#74789b"/><rect x="169" y="94" width="5" height="5" fill="#b0b9d7"/><rect x="169" y="99" width="5" height="5" fill="#888daf"/><rect x="6" y="17" width="195" height="5" fill="#9ab6f6" opacity=".9"/><rect x="148" y="52" width="12" height="5" fill="#aaa6b0"/></svg>
<div class="arrd" style="top:99px"><svg class="a" style="left:3px;top:4px;width:9px;height:7px" viewBox="0 0 9 7"><path d="M1 5.5L4.5 2L8 5.5" fill="none" stroke="#d5d5dd" stroke-width="1.8"/></svg></div>
<div class="arrd" style="top:191px"><svg class="a" style="left:3px;top:4px;width:9px;height:7px" viewBox="0 0 9 7"><path d="M1 1.5L4.5 5L8 1.5" fill="none" stroke="#d5d5dd" stroke-width="1.8"/></svg></div>

<!-- grid 2: Zeugnisart -->
<div class="a" style="left:907px;top:214px;width:236px;height:178px;background:#f4f4fd"></div>
<div class="a" style="left:907px;top:214px;width:236px;height:1px;background:#5d5d64"></div>
<div class="a" style="left:907px;top:214px;width:1px;height:178px;background:#6e6e76"></div>
<div class="a" style="left:908px;top:221px;width:235px;height:1px;background:#b4b4be"></div>
<div class="hd" style="left:908px;top:222px;width:217px;height:20px"></div>
<div class="ht" style="letter-spacing:0.016px;left:909px;top:226px">Zeugnisart (Anzeigeform)</div>
<div class="hs" style="left:1123px;top:224px"></div>
<div class="cbt" style="left:1125px;top:222px"><svg class="a" style="left:3px;top:3px;width:11px;height:11px" viewBox="0 0 11 11"><path d="M0 0.500h9M0 2.500h9M0.500 0v8M0 7.500h3.500M4.500 0v5M8.500 0v5" fill="none" stroke="#0a0a0a" stroke-width="1"/><path d="M2.500 6h7.500L6.250 10z" fill="#0a0a0a"/></svg></div>
<div id="zl" style="position:absolute;left:908px;top:242px;width:216px;height:149px;overflow:hidden;background:#fff">
<style>
#zl div{height:18px;line-height:17px;text-align:right;padding-right:2px;white-space:nowrap}
#zl div:nth-child(odd){background:#dbe5fb}
</style>
<div style="letter-spacing:0.119px">Halbjahresinformation</div><div style="letter-spacing:-0.059px">Halbjahreszeugnis</div><div style="letter-spacing:-0.188px">Jahreszeugnis</div><div style="letter-spacing:-0.191px">Abschlusszeugnis</div><div style="letter-spacing:-0.167px">Abgangszeugnis</div><div style="letter-spacing:0.281px;background:#3d7ef6;color:#fff;border-bottom:1px solid #fff">Zertifikat</div><div style="letter-spacing:-0.049px">Fachhochschulreife</div><div style="letter-spacing:-0.078px">Prüfung 1</div><div>KMK FS-Zertifikat</div>
</div>
<div class="sb" style="top:242px;height:149px"></div>
<div class="arr" style="top:243px"><svg class="a" style="left:2px;top:4px;width:9px;height:7px" viewBox="0 0 9 7"><path d="M1 5.5L4.5 2L8 5.5" fill="none" stroke="#3b4b6c" stroke-width="2"/></svg></div>
<div class="a" style="left:1126px;top:260px;width:16px;height:71px;border:1px solid #a9b8e0;border-radius:2px;background:linear-gradient(90deg,#f6f8ff,#c9d5f9 22%,#b7c4ee 60%,#a6b4de 92%,#f0f3fd)"></div>
<div class="a" style="left:1130px;top:291px;width:8px;height:8px;background:repeating-linear-gradient(#eef2fd 0 1px,transparent 1px 2px)"></div>
<div class="arr" style="top:375px"><svg class="a" style="left:2px;top:4px;width:9px;height:7px" viewBox="0 0 9 7"><path d="M1 1.5L4.5 5L8 1.5" fill="none" stroke="#3b4b6c" stroke-width="2"/></svg></div>
<!-- red highlight -->
<div class="a" style="left:899px;top:325px;width:232px;height:31px;border:2px solid #fb0007;box-shadow:2px 2px 3px rgba(40,40,40,.45),inset 2px 2px 3px rgba(40,40,40,.4)"></div>

<!-- filter -->
<div class="hl" style="left:907px;top:404px;width:236px;background:#7c7c84"></div>
<div class="btn" style="letter-spacing:0.258px;top:408px">Filter</div>
<div class="chk" style="top:413px"></div>
<div class="btn" style="letter-spacing:-0.441px;top:441px">Suche</div>
<div class="chk" style="top:446px"></div>
<div class="hl" style="left:907px;top:467px;width:236px;background:#fdfdff"></div>

<!-- grid 3 -->
<div class="a" style="left:907px;top:473px;width:236px;height:208px;background:#fbfbff"></div>
<div class="a" style="left:907px;top:473px;width:236px;height:1px;background:#6e6e76"></div>
<div class="a" style="left:907px;top:473px;width:1px;height:208px;background:#6e6e76"></div>
<div class="a" style="left:908px;top:474px;width:235px;height:1px;background:#b4b4be"></div><div class="hd" style="left:908px;top:475px;width:217px;height:20px"></div>
<div class="ht" style="letter-spacing:-0.222px;left:908px;top:479px">Klassengruppe</div>
<svg class="a" style="left:997px;top:483px;width:8px;height:5px" viewBox="0 0 8 5"><path d="M0 5L4 0.5L8 5z" fill="#1f2f55"/></svg>
<div class="hs" style="left:1008px;top:476px"></div>
<div class="ht" style="letter-spacing:-0.037px;left:1010px;top:479px">Sortierung</div>
<div class="hs" style="left:1081px;top:476px"></div>
<div class="ht" style="letter-spacing:-0.216px;left:1083px;top:479px">Bldg.</div>
<div class="hs" style="left:1123px;top:476px"></div>
<div class="cbt" style="left:1125px;top:474px"><svg class="a" style="left:3px;top:3px;width:11px;height:11px" viewBox="0 0 11 11"><path d="M0 0.500h9M0 2.500h9M0.500 0v8M0 7.500h3.500M4.500 0v5M8.500 0v5" fill="none" stroke="#0a0a0a" stroke-width="1"/><path d="M2.500 6h7.500L6.250 10z" fill="#0a0a0a"/></svg></div>
<div class="a" style="left:908px;top:494px;width:217px;height:187px;background:#e9e9f3"></div>
<div class="row" style="top:513px;background:#cdd9f5;width:217px"></div>
<div class="row" style="top:549px;background:#3d7ef6;height:17px;width:217px"></div>
<div class="ws" style="left:1008px;top:494px;height:90px"></div>
<div class="ws" style="left:1081px;top:494px;height:90px"></div>
<div class="rt" style="left:910px;top:497px">1BK1W1</div><div class="rt" style="left:1011px;top:497px">5</div><div class="rt" style="left:1085px;top:497px">1BK1W</div>
<div class="rt" style="left:908px;top:515px">FOFT</div><div class="rt" style="left:1011px;top:515px">58</div><div class="rt" style="left:1083px;top:515px">FOFT</div>
<div class="rt" style="left:908px;top:533px">KoBV</div><div class="rt" style="left:1011px;top:533px">65</div><div class="rt" style="left:1083px;top:533px">KOBV</div>
<div class="rt" style="left:908px;top:551px;color:#fff">VABO</div><div class="rt" style="left:1011px;top:551px;color:#fff">72</div><div class="rt" style="left:1083px;top:551px;color:#fff">VABO</div>
<div class="rt" style="left:908px;top:569px">WGW11/1</div><div class="rt" style="left:1011px;top:569px">95</div><div class="rt" style="left:1083px;top:569px">WGW</div>
<div class="arrd" style="top:498px"><svg class="a" style="left:3px;top:4px;width:9px;height:7px" viewBox="0 0 9 7"><path d="M1 5.5L4.5 2L8 5.5" fill="none" stroke="#d5d5dd" stroke-width="1.8"/></svg></div>
<div class="arrd" style="top:664px"><svg class="a" style="left:3px;top:4px;width:9px;height:7px" viewBox="0 0 9 7"><path d="M1 1.5L4.5 5L8 1.5" fill="none" stroke="#d5d5dd" stroke-width="1.8"/></svg></div>
<div class="t" style="letter-spacing:0.081px;left:907px;width:236px;text-align:center;top:684px">Anzahl: 5</div>
<div class="hl" style="left:907px;top:700px;width:240px;background:#fdfdff"></div>
<div class="hl" style="left:907px;top:723px;width:240px;background:#d3d0e4"></div>
<div id="nav2">
<svg class="a" style="left:955px;top:704px;width:16px;height:16px"><use href="#i-first"/></svg>
<svg class="a" style="left:975px;top:704px;width:16px;height:16px"><use href="#i-pprev"/></svg>
<svg class="a" style="left:996px;top:704px;width:16px;height:16px"><use href="#i-prev"/></svg>
<svg class="a" style="left:1016px;top:704px;width:16px;height:16px"><use href="#i-next"/></svg>
<svg class="a" style="left:1038px;top:704px;width:16px;height:16px"><use href="#i-nnext"/></svg>
<svg class="a" style="left:1058px;top:704px;width:16px;height:16px"><use href="#i-last"/></svg>
<svg class="a" style="left:1080px;top:704px;width:16px;height:16px"><use href="#i-refresh"/></svg>
</div>
</div>

<div class="a" style="left:8px;top:729px;width:892px;height:1px;background:#fff"></div>
</body></html>
